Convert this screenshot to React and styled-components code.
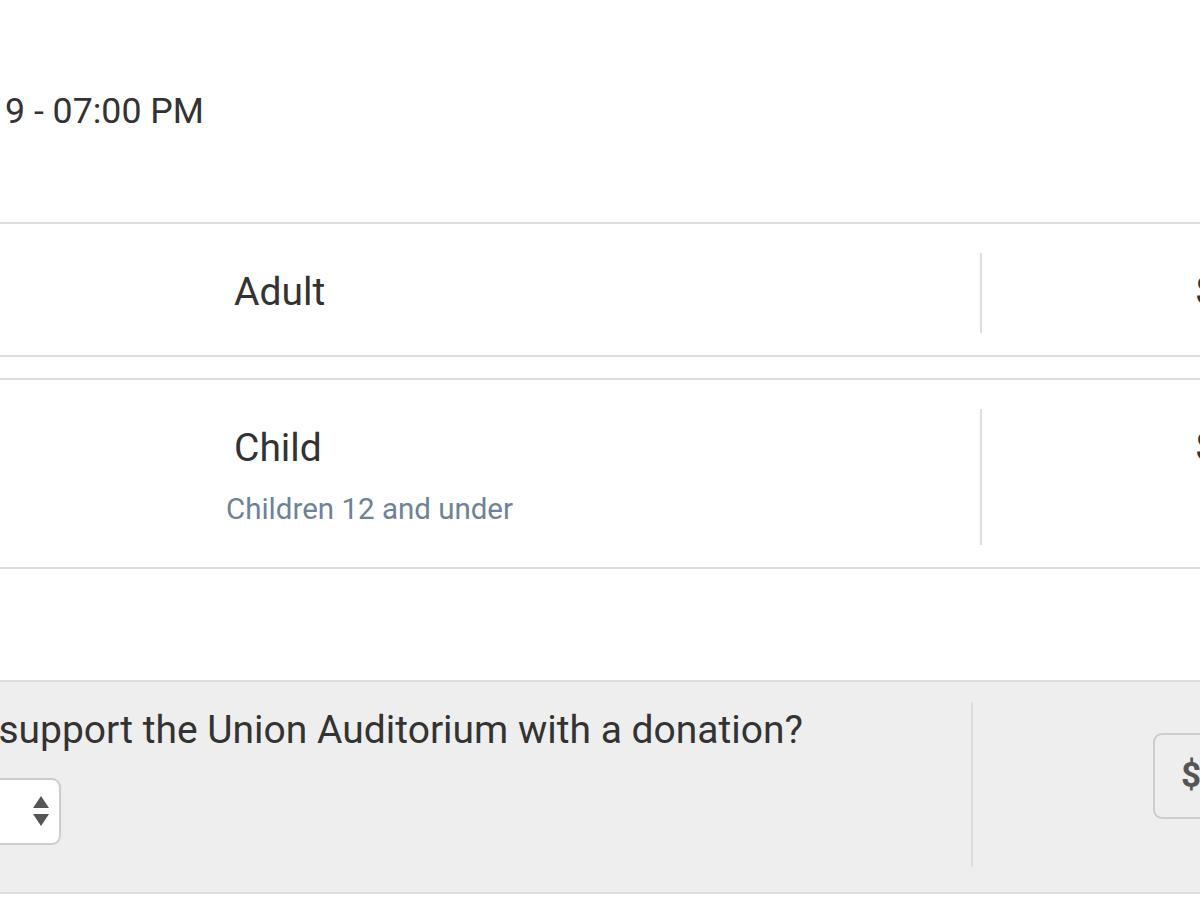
import React from "react";
import styled, { createGlobalStyle } from "styled-components";

const Global = createGlobalStyle`
  html, body {
    margin: 0;
    padding: 0;
    background: #ffffff;
    overflow: hidden;
  }
  body {
    font-family: Roboto, "Liberation Sans", Arial, sans-serif;
    color: #333333;
  }
`;

const Page = styled.div`
  width: 1200px;
  display: flex;
  flex-direction: column;
`;

const Heading = styled.h1`
  width: 204px;
  margin: 89px 0 88px 0;
  display: flex;
  justify-content: flex-end;
  white-space: nowrap;
  font-size: 35.7px;
  font-weight: 400;
  line-height: 1.25;
  color: #333333;
`;

const TicketList = styled.div`
  display: flex;
  flex-direction: column;
  gap: 21px;
`;

const TicketRow = styled.div`
  display: grid;
  grid-template-columns: 234px 746px 1fr;
  padding: 29px 0 22px 0;
  border-top: 2px solid #dddddd;
  border-bottom: 2px solid #dddddd;
  background: #ffffff;
`;

const QtyCell = styled.div``;

const NameCell = styled.div`
  display: flex;
  flex-direction: column;
  gap: 20px;
  padding: 17px 0 18px 0;
`;

const TicketName = styled.div`
  font-size: 39px;
  line-height: 45px;
  color: #333333;
  white-space: nowrap;
`;

const TicketNote = styled.div`
  margin-left: -8px;
  font-size: 29.5px;
  line-height: 36px;
  color: #6e8298;
  white-space: nowrap;
`;

const PriceCell = styled.div`
  border-left: 2px solid #dddddd;
  padding: 16px 0 0 213px;
  white-space: nowrap;
`;

const Price = styled.div`
  font-size: 39px;
  line-height: 45px;
  color: #333333;
`;

const DonationRow = styled.div`
  margin-top: 111px;
  display: grid;
  grid-template-columns: 971px 1fr;
  padding: 20px 0 25px 0;
  background: #eeeeee;
  border-top: 2px solid #dddddd;
  border-bottom: 2px solid #dddddd;
`;

const DonationMain = styled.div`
  display: flex;
  flex-direction: column;
  align-items: flex-start;
  padding: 6px 0 22px 0;
`;

const Question = styled.div`
  width: 803px;
  display: flex;
  justify-content: flex-end;
  white-space: nowrap;
  font-size: 39px;
  line-height: 45px;
  color: #333333;
`;

const SelectBox = styled.div`
  margin: 25px 0 0 -100px;
  width: 161px;
  height: 67px;
  box-sizing: border-box;
  display: flex;
  align-items: center;
  justify-content: flex-end;
  padding-right: 9px;
  background: #ffffff;
  border: 2px solid #cccccc;
  border-radius: 9px;
`;

const DonationAmount = styled.div`
  border-left: 2px solid #dddddd;
  padding: 31px 0 0 180px;
  display: flex;
  align-items: flex-start;
`;

const InputGroup = styled.div`
  display: flex;
  height: 86px;
`;

const Addon = styled.div`
  display: flex;
  align-items: center;
  padding: 0 22px 0 26px;
  background: #eeeeee;
  border: 2px solid #cccccc;
  border-radius: 9px 0 0 9px;
  font-size: 35px;
  font-weight: 700;
  color: #555555;
`;

const AmountInput = styled.div`
  width: 300px;
  background: #ffffff;
  border: 2px solid #cccccc;
  border-left: none;
`;

const Arrows = () => (
  <svg width="18" height="32" viewBox="0 0 18 32">
    <polygon points="9,1 17,13 1,13" fill="#555555" />
    <polygon points="1,19 17,19 9,31" fill="#555555" />
  </svg>
);

const tickets = [
  { name: "Adult", price: "$10.00" },
  { name: "Child", note: "Children 12 and under", price: "$5.00" },
];

export default function App() {
  return (
    <>
      <Global />
      <Page>
        <Heading>Saturday, March 23, 2019 - 07:00 PM</Heading>
        <TicketList>
          {tickets.map((t) => (
            <TicketRow key={t.name}>
              <QtyCell />
              <NameCell>
                <TicketName>{t.name}</TicketName>
                {t.note && <TicketNote>{t.note}</TicketNote>}
              </NameCell>
              <PriceCell>
                <Price>{t.price}</Price>
              </PriceCell>
            </TicketRow>
          ))}
        </TicketList>
        <DonationRow>
          <DonationMain>
            <Question>Would you like to support the Union Auditorium with a donation?</Question>
            <SelectBox>
              <Arrows />
            </SelectBox>
          </DonationMain>
          <DonationAmount>
            <InputGroup>
              <Addon>$</Addon>
              <AmountInput />
            </InputGroup>
          </DonationAmount>
        </DonationRow>
      </Page>
    </>
  );
}
